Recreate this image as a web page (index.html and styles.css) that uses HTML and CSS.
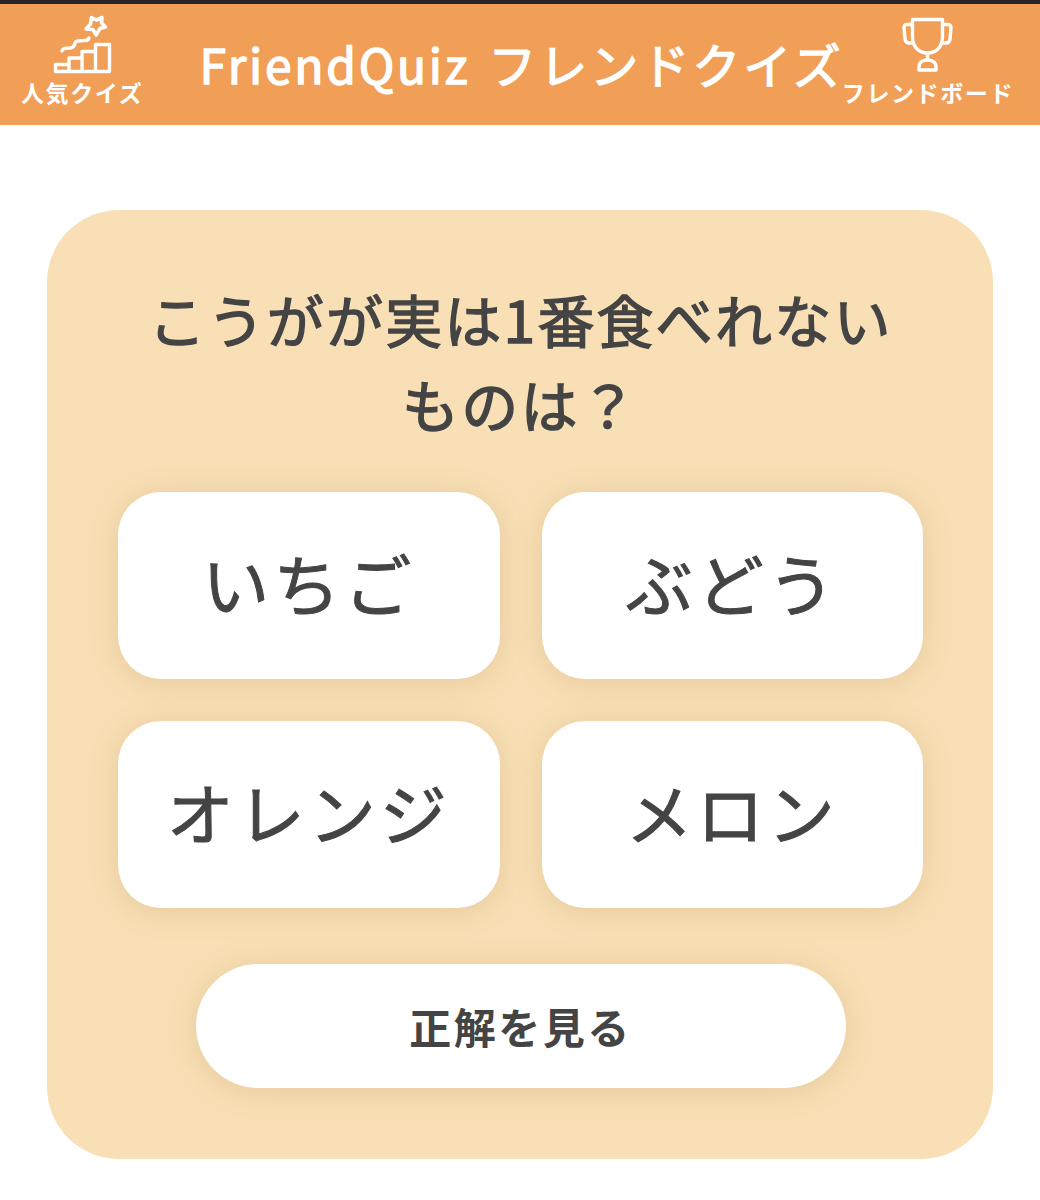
FILE: index.html
```html
<!DOCTYPE html>
<html lang="ja">
<head>
    <meta charset="UTF-8">
    <meta name="viewport" content="width=device-width, initial-scale=1.0">
    <title>FriendQuiz フレンドクイズ</title>
    <link rel="stylesheet" href="styles.css">
</head>
<body>
    <header class="header">
        <a class="nav-item nav-quiz">
            <svg class="nav-icon" width="60" height="60" viewBox="0 0 60 60">
                <path d="M39.5 3.5 L44.5 6 L50 3.5 L49.5 9 L53.5 13 L48 14.5 L44 21 L41 15.500 L34 15 L38.500 10 Z" stroke-width="3.6"/>
                <path d="M10 37 C11 32 18 36 21 33 C24 31 21 28 26 27 C31 26 36 28 37 24"/>
                <path d="M3.500 57.500 V50.500 H17 V57.500 M17 50.500 V44 H30 V57.500 M30 44 V37.500 H43.500 V57.500 M43.500 37.500 V30.500 H57.500 V57.500 H3.500"/>
            </svg>
            <span class="nav-label">人気クイズ</span>
        </a>
        <h1 class="title"><span class="title-en">FriendQuiz</span><span>フレンドクイズ</span></h1>
        <a class="nav-item nav-board">
            <svg class="nav-icon" width="60" height="60" viewBox="0 0 60 60">
                <path d="M14.500 5.500 H44.500 V23 C44.500 33 38 39 29.500 39 C21 39 14.500 33 14.500 23 Z"/>
                <path d="M14.500 10.500 H9 Q6 10.500 6 13.500 L7 25 Q7.500 29 11 29 H15.500 M44.500 10.500 H49.500 Q53 10.500 53 13.500 L52 25 Q51.500 29 48 29 H43.500"/>
                <path d="M29.500 39 V46 M21 56 V53 C21 48 25 46 29.500 46 C34 46 38 48 38 53 V56 Z"/>
            </svg>
            <span class="nav-label">フレンドボード</span>
        </a>
    </header>

    <main class="quiz-card">
        <h2 class="question">こうがが実は1番食べれない<br>ものは？</h2>
        <div class="options">
            <button class="option">いちご</button>
            <button class="option">ぶどう</button>
            <button class="option">オレンジ</button>
            <button class="option">メロン</button>
        </div>
        <button class="answer-btn">正解を見る</button>
    </main>
</body>
</html>
```
FILE: styles.css
```css
* {
    box-sizing: border-box;
}

body {
    margin: 0;
    background-color: #ffffff;
    color: #444444;
    font-family: "Noto Sans CJK JP", sans-serif;
}

.header {
    display: flex;
    height: 125px;
    padding: 10px 26px 0 21px;
    border-top: 4px solid #272727;
    background-color: #f19e56;
    color: #ffffff;
}

.nav-item {
    display: flex;
    flex-direction: column;
    align-items: center;
}

.nav-icon {
    fill: none;
    stroke: #ffffff;
    stroke-width: 3.4;
    stroke-linecap: round;
    stroke-linejoin: round;
}

.nav-label {
    font-size: 23px;
    font-weight: bold;
    line-height: 36px;
    letter-spacing: 1.6px;
    white-space: nowrap;
}

.title {
    display: flex;
    gap: 18px;
    margin: 0 -2px 0 auto;
    font-size: 48px;
    font-weight: 400;
    line-height: 98px;
    letter-spacing: 3px;
    white-space: nowrap;
    -webkit-text-stroke: 1.4px #ffffff;
}

.title-en {
    letter-spacing: 2.7px;
}

/* Quiz card */
.quiz-card {
    width: 946px;
    height: 949px;
    margin: 85px 0 0 47px;
    padding: 66px 70px 0 71px;
    border-radius: 72px;
    background-color: #f8dfb5;
}

.question {
    height: 175px;
    margin: 0 0 41px;
    font-size: 57px;
    font-weight: 400;
    line-height: 85px;
    letter-spacing: 2.2px;
    text-align: center;
    white-space: nowrap;
    -webkit-text-stroke: 1.4px #444444;
}

.options {
    display: grid;
    grid-template-columns: 1fr 1fr;
    grid-auto-rows: 187px;
    gap: 42px;
}

.option,
.answer-btn {
    padding: 0;
    border: none;
    background-color: #ffffff;
    color: #444444;
    font-family: inherit;
    box-shadow: 0 3px 30px rgba(150, 105, 40, 0.18);
    cursor: pointer;
}

.option {
    padding-bottom: 9px;
    border-radius: 43px;
    font-size: 67px;
    letter-spacing: 4px;
    -webkit-text-stroke: 1px #444444;
}

.answer-btn {
    display: block;
    width: 650px;
    height: 124px;
    margin: 56px auto 0;
    padding-bottom: 2px;
    border-radius: 62px;
    font-size: 42px;
    font-weight: bold;
    letter-spacing: 2.5px;
}
```
